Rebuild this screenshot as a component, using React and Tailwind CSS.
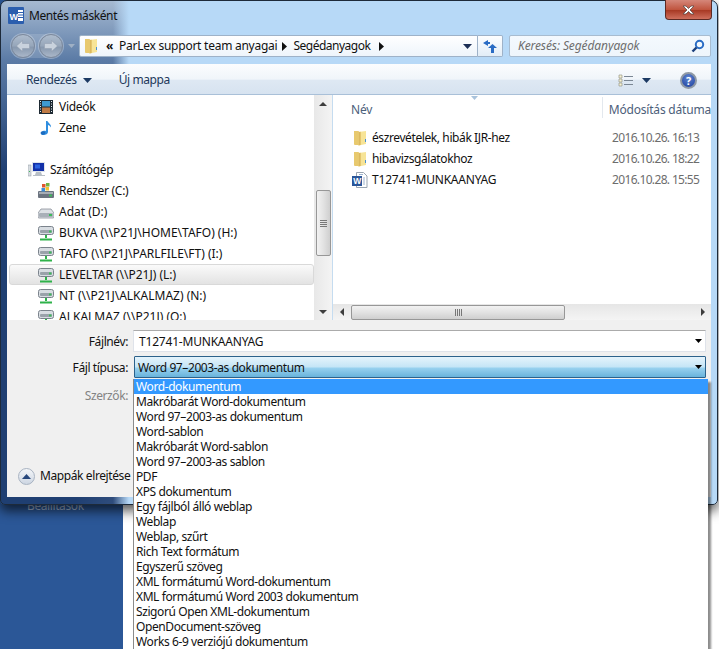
import React from "react";

const Folder = () => (
  <svg width="16" height="16" viewBox="0 0 16 16" className="shrink-0">
    <path d="M2 1h4.500l1 1.500v12.500H3a1 1 0 0 1-1-1z" fill="#e8c96e" />
    <path d="M6.500 2l7.500-1v13l-7.500 1.500z" fill="#f7e497" />
    <path d="M6.500 2l2.200-.3v13.300l-2.200.5z" fill="#dcb95f" />
    <path d="M14 9v3h-1V9z" fill="#4a90d0" />
  </svg>
);

const WordDoc = () => (
  <svg width="16" height="16" viewBox="0 0 16 16" className="shrink-0">
    <path d="M4.500 .5h7l3.500 3.500v11.500h-10.500z" fill="#fff" stroke="#9aa5b1" />
    <path d="M7 2.500h4M11 6h2M11 8h2M11 10h2M11 12h2" stroke="#9db4cf" />
    <rect x="0" y="4" width="10" height="10" fill="#2a5699" />
    <text x="5" y="12" textAnchor="middle" fontSize="8.500" fontWeight="700" fill="#fff" fontFamily="Liberation Sans, sans-serif">W</text>
  </svg>
);

const TitleWord = () => (
  <svg width="16" height="17" viewBox="0 0 16 17" className="shrink-0">
    <rect x="0" y="0" width="16" height="17" rx="1" fill="#2b5eae" />
    <rect x="10" y="3" width="5" height="11" fill="#fff" />
    <path d="M10 5.500h5M10 8h5M10 10.500h5" stroke="#2b5eae" />
    <text x="5.500" y="12.500" textAnchor="middle" fontSize="9" fontWeight="700" fill="#fff" fontFamily="Liberation Sans, sans-serif">W</text>
  </svg>
);

const Video = () => (
  <svg width="16" height="16" viewBox="0 0 16 16" className="shrink-0">
    <rect x="1" y="1" width="14" height="14" fill="#1e2a33" />
    <rect x="4" y="2" width="8" height="5.500" fill="#3f9ad0" />
    <rect x="4" y="8.500" width="8" height="5.500" fill="#bf7a45" />
    <path d="M2 2.500h1M2 5h1M2 7.500h1M2 10h1M2 12.500h1M13 2.500h1M13 5h1M13 7.500h1M13 10h1M13 12.500h1" stroke="#e6eef4" />
  </svg>
);

const Music = () => (
  <svg width="16" height="16" viewBox="0 0 16 16" className="shrink-0">
    <path d="M8 1h1.500c.5 2 4 3 3.500 6.500-.8-1.500-2-2.300-3-2.500v7c0 2-3 3.500-5.500 3C2.500 14.500 2.500 12 5 11c1-.4 2-.4 3-.1z" fill="#2f8ee0" />
    <ellipse cx="5" cy="13" rx="2.500" ry="1.800" fill="#1c6cc0" />
  </svg>
);

const Computer = () => (
  <svg width="17" height="15" viewBox="0 0 17 15" className="shrink-0">
    <rect x="0" y="3" width="3" height="11" fill="#d8dde2" stroke="#8d969e" strokeWidth=".5" />
    <rect x="1" y="9" width="1" height="1" fill="#3cba5a" />
    <rect x="4" y="0" width="13" height="10" fill="#dfe4ea" />
    <rect x="5" y="1" width="11" height="8" fill="#1330a8" />
    <rect x="7" y="2.500" width="5" height="4" fill="#2c63e0" />
    <path d="M8 10h5l1 3h3v1H5v-1h2z" fill="#b8bfc6" />
  </svg>
);

const SysDrive = () => (
  <svg width="16" height="16" viewBox="0 0 16 16" className="shrink-0">
    <rect x="0" y="8" width="16" height="7" rx="1" fill="#6c7480" />
    <rect x="1" y="9" width="14" height="2" fill="#a6adb5" />
    <rect x="11" y="11.500" width="3" height="2" fill="#3cba5a" />
    <rect x="4" y="1" width="3.500" height="3.500" fill="#e0562f" />
    <rect x="8" y="0" width="3.500" height="3.500" fill="#71b344" />
    <rect x="3.500" y="5" width="3.500" height="3.500" fill="#3d8dd8" />
    <rect x="7.500" y="4" width="3.500" height="3.500" fill="#f1c232" />
  </svg>
);

const Drive = () => (
  <svg width="16" height="16" viewBox="0 0 16 16" className="shrink-0">
    <path d="M3 5h10l3 4v4a1 1 0 0 1-1 1H1a1 1 0 0 1-1-1V9z" fill="#dde1e5" stroke="#7b838c" strokeWidth=".7" />
    <rect x="1" y="9" width="14" height="4" rx="1" fill="#a9b0b8" />
    <rect x="11" y="10" width="3" height="2" fill="#3cba5a" />
  </svg>
);

const NetDrive = () => (
  <svg width="16" height="16" viewBox="0 0 16 16" className="shrink-0">
    <rect x=".5" y="1.500" width="15" height="8" rx="2" fill="#d8dde2" stroke="#7b838c" />
    <rect x="2" y="5" width="12" height="3" rx="1" fill="#9aa2aa" />
    <rect x="11" y="5.500" width="2.500" height="2" fill="#3cba5a" />
    <path d="M8 10v3M2 14.500h12" stroke="#2fb24a" strokeWidth="2" />
  </svg>
);

const Caret = ({ c = "#1c3a63", w = 9, h = 5 }) => (
  <svg width={w} height={h} viewBox="0 0 9 5" className="shrink-0">
    <path d="M0 0h9L4.500 5z" fill={c} />
  </svg>
);

const RightTri = () => (
  <svg width="5" height="9" viewBox="0 0 5 9" className="shrink-0">
    <path d="M0 0l5 4.500L0 9z" fill="#111" />
  </svg>
);

const ArrowBtn = ({ flip }) => (
  <div className="flex h-6 w-6 items-center justify-center rounded-full border border-[#7d899b] bg-[linear-gradient(#aebccd,#96a6ba_50%,#8798ae_55%,#aab7c9)] shadow-[0_0_0_1px_rgba(255,255,255,0.3)]">
    <svg width="14" height="12" viewBox="0 0 14 12" className={flip ? "rotate-180" : ""}>
      <path d="M6.500 .5L.5 6l6 5.500V8.500h7v-5h-7z" fill="#c9d2dd" stroke="#8e9bad" strokeWidth=".5" />
    </svg>
  </div>
);

const ScrollArrow = ({ d }) => (
  <svg width="8" height="8" viewBox="0 0 8 8">
    <path d={d} fill="#3d3d3d" />
  </svg>
);

const Grip = ({ vertical }) => (
  <div className={vertical ? "flex flex-col gap-[1px]" : "flex gap-[1px]"}>
    <span className={vertical ? "h-[1px] w-[7px] bg-[#777]" : "h-[7px] w-[1px] bg-[#777]"} />
    <span className={vertical ? "h-[1px] w-[7px] bg-[#777]" : "h-[7px] w-[1px] bg-[#777]"} />
    <span className={vertical ? "h-[1px] w-[7px] bg-[#777]" : "h-[7px] w-[1px] bg-[#777]"} />
    <span className={vertical ? "h-[1px] w-[7px] bg-[#777]" : "h-[7px] w-[1px] bg-[#777]"} />
  </div>
);

const NavRow = ({ icon, text, hl, top, caps }) => (
  <div
    className={
      "ml-[2px] flex h-[21px] shrink-0 items-center gap-[5px] rounded-[3px] border whitespace-nowrap " +
      (top ? "pl-[18px] " : "pl-[28px] ") +
      (caps ? "tracking-[0px] " : "tracking-[-0.3px] ") +
      (hl
        ? "border-[#d9d9d9] bg-[linear-gradient(#fafafa,#e3e3e3)]"
        : "border-transparent")
    }
  >
    {icon}
    <span>{text}</span>
  </div>
);

const FileRow = ({ icon, name, date, caps }) => (
  <div className="flex h-[21px] items-center whitespace-nowrap">
    <div className="flex w-[20px] justify-start">{icon}</div>
    <span className={"w-[240px] " + (caps ? "tracking-[-0.2px]" : "")}>{name}</span>
    <span className="tracking-[-0.65px] text-[#6d6d6d]">{date}</span>
  </div>
);

const types = [
  "Word-dokumentum",
  "Makróbarát Word-dokumentum",
  "Word 97–2003-as dokumentum",
  "Word-sablon",
  "Makróbarát Word-sablon",
  "Word 97–2003-as sablon",
  "PDF",
  "XPS dokumentum",
  "Egy fájlból álló weblap",
  "Weblap",
  "Weblap, szűrt",
  "Rich Text formátum",
  "Egyszerű szöveg",
  "XML formátumú Word-dokumentum",
  "XML formátumú Word 2003 dokumentum",
  "Szigorú Open XML-dokumentum",
  "OpenDocument-szöveg",
  "Works 6-9 verziójú dokumentum",
];

export default function App() {
  return (
    <div className="relative h-[649px] w-[719px] overflow-hidden bg-white text-[12px] leading-[16px] tracking-[-0.4px] text-[#111] [font-family:'Noto_Sans',sans-serif]">
      {/* desktop behind the dialog */}
      <div className="absolute bottom-0 left-0 top-0 w-[123px] bg-[#2b5797]">
        <div className="absolute left-[27px] top-[498px] text-[#9fb3d0]">Beállítások</div>
      </div>

      {/* dialog */}
      <div className="relative flex h-[505px] w-[718px] flex-col rounded-t-[7px] rounded-b-[5px] border border-[#1d2a3a] px-[6px] pb-[7px] shadow-[0_6px_12px_rgba(0,0,0,0.65)] [background:linear-gradient(to_right,transparent_112px,#b7d9f7_128px),linear-gradient(112deg,transparent_30%,rgba(255,255,255,0.3)_48%,transparent_60%),linear-gradient(to_bottom,#a6bad2,#5a7aa5_60px,#1f3f72_170px,#1f3f72)]">
        {/* title bar */}
        <div className="relative flex h-[34px] shrink-0 items-start gap-[5px] pt-[6px] pl-[1px]">
          <TitleWord />
          <span className="pt-[1px] text-[#111]">Mentés másként</span>
          <div className="absolute right-[-1px] top-[-1px] flex h-[20px] w-[47px] items-center justify-center rounded-b-[4px] border border-t-0 border-[#5c2a24] bg-[linear-gradient(#d5877a,#c0553f_50%,#a83a25_55%,#cf6f5d)]">
            <svg width="15" height="10" viewBox="0 0 15 10">
              <path d="M2 1h3l2.500 2.500L10 1h3l-4 4 4 4h-3L7.500 6.500 5 9H2l4-4z" fill="#fff" stroke="#5c4a48" strokeWidth=".8" />
            </svg>
          </div>
        </div>

        {/* navigation row */}
        <div className="flex h-[22px] shrink-0 items-center">
          <div className="ml-[4px] flex items-center gap-[4px] rounded-full bg-[rgba(255,255,255,0.15)]">
            <ArrowBtn />
            <ArrowBtn flip />
          </div>
          <div className="ml-[5px]">
            <Caret c="#9fb0c5" w={7} h={4} />
          </div>
          <div className="ml-[4px] flex h-[22px] w-[399px] items-center rounded-l-[2px] border border-[#9eb2c8] bg-[linear-gradient(#ffffff,#eef5fb)] pl-[3px]">
            <Folder />
            <span className="ml-[7px] text-[12px] font-bold">«</span>
            <span className="ml-[6px] tracking-[-0.25px]">ParLex support team anyagai</span>
            <span className="ml-[5px]"><RightTri /></span>
            <span className="ml-[6px] tracking-[-0.5px]">Segédanyagok</span>
            <span className="ml-[9px]"><RightTri /></span>
            <span className="ml-auto mr-[5px]"><Caret c="#1c2f55" /></span>
          </div>
          <div className="flex h-[22px] w-[25px] items-center justify-center rounded-r-[2px] border border-l-0 border-[#9eb2c8] bg-[linear-gradient(#fdfeff,#e2edf7)]">
            <svg width="14" height="13" viewBox="0 0 14 13">
              <path d="M5 0v2h2v2H5v2L0 3z" fill="#2a6cc4" />
              <path d="M9.500 4L14 8h-3v5H8V8H5z" fill="#2a6cc4" />
            </svg>
          </div>
          <div className="ml-[6px] flex h-[22px] w-[202px] items-center justify-between rounded-[2px] border border-[#a8bcd0] bg-[linear-gradient(#f4f9fe,#eef5fb)] pl-[8px] pr-[5px]">
            <span className="italic tracking-[-0.1px] text-[#6d6d6d]">Keresés: Segédanyagok</span>
            <svg width="14" height="14" viewBox="0 0 14 14">
              <circle cx="8.500" cy="5.500" r="3.700" fill="none" stroke="#2a6cc4" strokeWidth="2" />
              <path d="M5.500 8.500L1.500 12.500" stroke="#1b3f7c" strokeWidth="2.400" />
            </svg>
          </div>
        </div>

        {/* inner panel */}
        <div className="mt-[7px] flex min-h-0 flex-1 flex-col rounded-t-[1px] border-0 bg-[#f0f0f0]">
          {/* toolbar */}
          <div className="flex h-[31px] shrink-0 items-center border-b border-[#a9c0d8] bg-[linear-gradient(#fbfdfe,#f0f5fa_50%,#dee8f3_55%,#d7e3f0)] pl-[19px] pt-[2px] text-[#1e395b]">
            <span>Rendezés</span>
            <span className="ml-[6px]"><Caret /></span>
            <span className="ml-[27px]">Új mappa</span>
            <div className="ml-auto flex items-center">
              <svg width="16" height="13" viewBox="0 0 16 13">
                <path d="M1 1h3v3H1zM1 5h3v3H1zM1 9h3v3H1z" fill="#f7f3d5" stroke="#8a8a7a" strokeWidth=".6" />
                <path d="M6 2.500h9M6 6.500h9M6 10.500h9" stroke="#7b8794" />
              </svg>
              <span className="ml-[8px]"><Caret /></span>
              <div className="ml-[29px] mr-[14px] flex h-[17px] w-[17px] items-center justify-center rounded-full border-2 border-[#8f99a5] bg-[radial-gradient(circle_at_50%_30%,#5d84cf,#1e3f9e)] text-[11px] font-bold leading-none text-white">
                ?
              </div>
            </div>
          </div>

          {/* browser */}
          <div className="flex h-[225px] shrink-0 bg-white">
            <div className="flex w-[307px] shrink-0 flex-col overflow-hidden pt-[1px]">
              <NavRow icon={<Video />} text="Videók" />
              <NavRow icon={<Music />} text="Zene" />
              <div className="h-[21px] shrink-0" />
              <NavRow top icon={<Computer />} text="Számítógép" />
              <NavRow icon={<SysDrive />} text="Rendszer (C:)" />
              <NavRow caps icon={<Drive />} text="Adat (D:)" />
              <NavRow caps icon={<NetDrive />} text="BUKVA (\\P21J\HOME\TAFO) (H:)" />
              <NavRow caps icon={<NetDrive />} text="TAFO (\\P21J\PARLFILE\FT) (I:)" />
              <NavRow caps hl icon={<NetDrive />} text="LEVELTAR (\\P21J) (L:)" />
              <NavRow caps icon={<NetDrive />} text="NT (\\P21J\ALKALMAZ) (N:)" />
              <NavRow caps icon={<NetDrive />} text="ALKALMAZ (\\P21J) (O:)" />
            </div>

            {/* vertical scrollbar */}
            <div className="flex w-[18px] shrink-0 flex-col items-center bg-[linear-gradient(to_right,#e8e8e8,#f4f4f4)]">
              <div className="flex h-[17px] w-full items-center justify-center">
                <ScrollArrow d="M4 2l4 4H0z" />
              </div>
              <div className="mt-[78px] flex h-[66px] w-[15px] items-center justify-center rounded-[2px] border border-[#979797] bg-[linear-gradient(to_right,#f2f2f2,#e2e2e2_50%,#cfcfcf)]">
                <Grip vertical />
              </div>
              <div className="mt-auto flex h-[17px] w-full items-center justify-center">
                <ScrollArrow d="M0 2h8L4 6z" />
              </div>
            </div>

            {/* file pane */}
            <div className="flex min-w-0 flex-1 flex-col border-l border-[#c5dcf0]">
              <div className="relative flex h-[24px] shrink-0 items-center tracking-[-0.2px] text-[#4c607a]">
                <span className="ml-[18px] w-[254px] pt-[6px]">Név</span>
                <span className="h-[21px] w-[1px] bg-[#e3e8ee]" />
                <span className="ml-[6px] whitespace-nowrap pt-[6px]">Módosítás dátuma</span>
                <span className="absolute left-[138px] top-[1px]">
                  <Caret c="#a9c3dc" w={7} h={4} />
                </span>
              </div>
              <div className="flex flex-col pl-[19px] pt-[8px]">
                <FileRow icon={<Folder />} name="észrevételek, hibák IJR-hez" date="2016.10.26. 16:13" />
                <FileRow icon={<Folder />} name="hibavizsgálatokhoz" date="2016.10.26. 18:22" />
                <FileRow caps icon={<WordDoc />} name="T12741-MUNKAANYAG" date="2016.10.28. 15:55" />
              </div>
              <div className="mt-auto flex h-[16px] shrink-0 items-center bg-[linear-gradient(#e6e6e6,#f4f4f4)]">
                <div className="flex w-[18px] justify-center">
                  <ScrollArrow d="M6 0v8L2 4z" />
                </div>
                <div className="flex h-[15px] w-[214px] items-center justify-center rounded-[2px] border border-[#979797] bg-[linear-gradient(#f2f2f2,#e2e2e2_50%,#cfcfcf)]">
                  <Grip />
                </div>
                <div className="ml-auto flex w-[16px] justify-center">
                  <ScrollArrow d="M2 0v8l4-4z" />
                </div>
              </div>
            </div>
          </div>

          {/* form */}
          <div className="flex min-h-0 flex-1 flex-col pb-[13px] pr-[5px] pt-[10px]">
            <div className="flex items-center">
              <span className="w-[121px] pt-[1px] text-right">Fájlnév:</span>
              <div className="ml-[5px] flex h-[22px] flex-1 items-center justify-between border border-[#dfe3ea] border-t-[#ababab] bg-white pl-[5px] pr-[3px]">
                <span className="pt-[1px] tracking-[-0.2px]">T12741-MUNKAANYAG</span>
                <Caret c="#000" w={7} h={4} />
              </div>
            </div>
            <div className="mt-[4px] flex items-center">
              <span className="w-[121px] pt-[1px] text-right">Fájl típusa:</span>
              <div className="ml-[6px] flex h-[22px] flex-1 items-center justify-between rounded-[1px] border border-[#2c628b] bg-[linear-gradient(#e5f4fc,#c4e5f6_50%,#98d1ef_55%,#68b3db)] pl-[3px] pr-[3px]">
                <span className="pt-[1px]">Word 97–2003-as dokumentum</span>
                <Caret c="#000" w={7} h={4} />
              </div>
            </div>
            <div className="mt-[7px] flex h-[20px] items-center">
              <span className="w-[121px] pt-[1px] text-right text-[#838383]">Szerzők:</span>
            </div>
            <div className="mt-auto flex h-[16px] items-center pl-[11px]">
              <div className="flex h-[17px] w-[17px] items-center justify-center rounded-full border border-[#a8b3c2] bg-[linear-gradient(#f4f6f9,#cdd6e2)]">
                <svg width="9" height="5" viewBox="0 0 9 5"><path d="M4.500 0L9 5H0z" fill="#27477c" /></svg>
              </div>
              <span className="ml-[5px]">Mappák elrejtése</span>
            </div>
          </div>
        </div>
      </div>

      {/* open dropdown list */}
      <div className="absolute left-[133px] top-[379px] h-[271px] w-[575px] border-l border-[#8b8b8b] bg-white shadow-[3px_3px_2px_rgba(0,0,0,0.45)]">
        {types.map((t, i) => (
          <div
            key={t}
            className={
              "flex h-[15px] items-center whitespace-nowrap pl-[2px] leading-[15px] " +
              (i === 0 ? "bg-[#3399ff] text-white" : "text-[#111]")
            }
          >
            {t}
          </div>
        ))}
      </div>
    </div>
  );
}
